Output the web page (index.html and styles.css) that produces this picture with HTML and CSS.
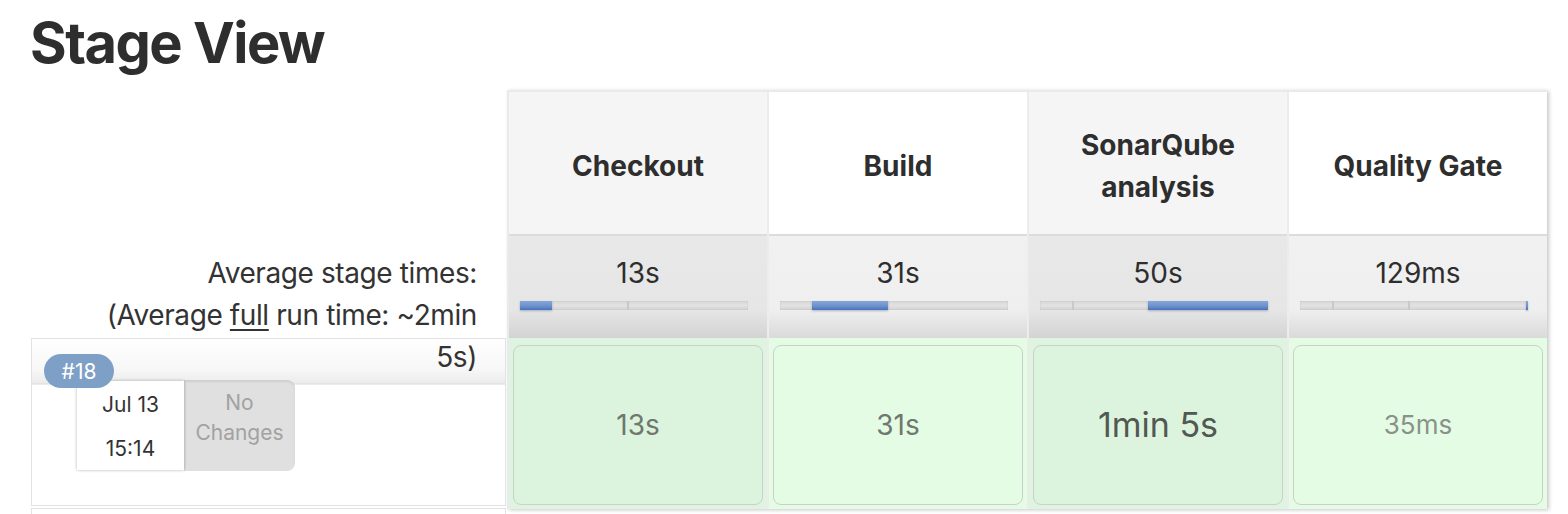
FILE: index.html
```html
<!DOCTYPE html>
<html lang="en">
<head>
<meta charset="utf-8">
<title>Stage View</title>
<link rel="stylesheet" href="styles.css">
</head>
<body>
<div class="page">
  <h1 class="title">Stage View</h1>
  <div class="stage-view">
    <div class="jobs">
      <div class="jobs-spacer"></div>
      <div class="avg-label">Average stage times:<br>(Average <u>full</u> run time: ~2min 5s)</div>
      <div class="job-row">
        <span class="badge">#18</span>
        <div class="job-info">
          <div class="date"><div>Jul 13</div><div>15:14</div></div>
          <div class="changes">No<br>Changes</div>
        </div>
      </div>
      <div class="job-row next"></div>
    </div>

    <div class="stages">
      <div class="head odd"><span>Checkout</span></div>
      <div class="head even"><span>Build</span></div>
      <div class="head odd"><span>SonarQube analysis</span></div>
      <div class="head even"><span>Quality Gate</span></div>

      <div class="avg odd">
        <div class="avg-time">13s</div>
        <div class="track">
          <div class="seg active" style="width:32px"></div>
          <div class="seg" style="width:75px"></div>
          <div class="seg sep" style="width:121px"></div>
        </div>
      </div>
      <div class="avg even">
        <div class="avg-time">31s</div>
        <div class="track">
          <div class="seg" style="width:32px"></div>
          <div class="seg active" style="width:76px"></div>
          <div class="seg" style="width:120px"></div>
        </div>
      </div>
      <div class="avg odd">
        <div class="avg-time">50s</div>
        <div class="track">
          <div class="seg" style="width:32px"></div>
          <div class="seg sep" style="width:76px"></div>
          <div class="seg active" style="width:120px"></div>
        </div>
      </div>
      <div class="avg even">
        <div class="avg-time">129ms</div>
        <div class="track">
          <div class="seg" style="width:32px"></div>
          <div class="seg sep" style="width:76px"></div>
          <div class="seg sep" style="width:118px"></div>
          <div class="seg active" style="width:2px"></div>
        </div>
      </div>

      <div class="run odd"><div class="box"><span class="dur-m">13s</span></div></div>
      <div class="run even"><div class="box"><span class="dur-m">31s</span></div></div>
      <div class="run odd"><div class="box"><span class="dur-l">1min 5s</span></div></div>
      <div class="run even"><div class="box"><span class="dur-s">35ms</span></div></div>
    </div>
  </div>
</div>
</body>
</html>
```

FILE: styles.css
```css
html, body {
  margin: 0;
  padding: 0;
  background: #fff;
}

body {
  font-family: Inter, "Noto Sans", "Liberation Sans", sans-serif;
  color: #333;
  font-size: 28px;
  line-height: 42px;
}

.page {
  padding-left: 31px;
  overflow: hidden;
  height: 514px;
}

.title {
  margin: 10px 0 0 -1px;
  font-size: 56px;
  line-height: 67px;
  font-weight: 700;
  letter-spacing: -1.5px;
  color: #2e2e2e;
}

.stage-view {
  display: flex;
  align-items: flex-start;
  margin-top: 13px;
}

/* ---- left: job column ---- */
.jobs {
  width: 475px;
  flex: none;
}

.jobs-spacer {
  height: 146px;
}

.avg-label {
  position: relative;
  z-index: 1;
  box-sizing: border-box;
  height: 102px;
  padding: 16px 29px 0 60px;
  text-align: right;
  letter-spacing: -0.4px;
  color: #333;
}

.avg-label u {
  text-decoration-thickness: 2px;
  text-underline-offset: 4px;
}

.job-row {
  position: relative;
  box-sizing: border-box;
  height: 168px;
  border: 1px solid #e2e2e2;
  background:
    linear-gradient(to bottom, #ffffff 0, #f7f7f7 30px, #ececec 44px, #d9d9d9 45px, #ffffff 46px) no-repeat top left / 100% 46px,
    #fff;
}

.job-row.next {
  margin-top: 2px;
  height: 40px;
  background: #fff;
}

.badge {
  position: absolute;
  z-index: 2;
  left: 12px;
  top: 15px;
  width: 70px;
  height: 34px;
  border-radius: 17px;
  background: #7fa0c6;
  color: #fff;
  font-size: 21px;
  line-height: 35px;
  text-align: center;
}

.job-info {
  display: flex;
  padding: 42px 0 0 45px;
}

.date {
  position: relative;
  z-index: 1;
  box-sizing: border-box;
  width: 107px;
  height: 89px;
  padding-top: 2px;
  background: #fff;
  box-shadow: 0 0 3px rgba(0, 0, 0, 0.3);
  font-size: 21px;
  line-height: 44px;
  text-align: center;
  color: #333;
}

.changes {
  box-sizing: border-box;
  width: 111px;
  height: 91px;
  margin-top: -1px;
  padding-top: 8px;
  border-radius: 0 8px 8px 0;
  background: #e0e0e0;
  box-shadow: inset 0 2px 2px rgba(0, 0, 0, 0.08);
  color: #a2a2a2;
  font-size: 21px;
  line-height: 30px;
  text-align: center;
}

/* ---- right: stage table ---- */
.stages {
  margin-left: 1px;
  display: grid;
  grid-template-columns: repeat(4, 258px);
  grid-template-rows: 144px 102px 171px;
  column-gap: 2px;
  background: #ececec;
  border-top: 2px solid #e8ebee;
  border-left: 2px solid #e8ebee;
  box-shadow: 2px 1px 4px rgba(0, 0, 0, 0.22);
}

.head {
  box-sizing: border-box;
  display: flex;
  align-items: center;
  justify-content: center;
  padding: 5px 24px 0;
  border-bottom: 2px solid #dcdcdc;
  font-weight: 700;
  text-align: center;
  color: #2e2e2e;
}

.head.odd { background: #f5f5f5; }
.head.even { background: #fff; }

.avg {
  box-sizing: border-box;
  padding-top: 16px;
  text-align: center;
}

.avg.odd { background: linear-gradient(to bottom, #e8e8e8 0, #e6e6e6 72%, #d3d3d3 100%); }
.avg.even { background: linear-gradient(to bottom, #f1f1f1 0, #efefef 72%, #dadada 100%); }

.avg-time {
  color: #2e2e2e;
}

.track {
  display: flex;
  margin: 7px 0 0 11px;
  width: 228px;
  height: 9px;
  background: linear-gradient(to bottom, #d6d6d6, #e2e2e2 50%, #d2d2d2);
  box-shadow: inset 0 0 1px rgba(0, 0, 0, 0.3);
}

.seg {
  box-sizing: border-box;
  height: 9px;
}

.seg.sep {
  border-left: 2px solid #c9c9c9;
}

.seg.active {
  background: linear-gradient(to bottom, #86a6d6 0, #6d92cc 55%, #4a72bb 100%);
  box-shadow: 0 1px 2px rgba(40, 70, 130, 0.35);
}

.run {
  box-sizing: border-box;
  padding: 7px 4px 4px;
}

.run.odd { background: #def3e0; }
.run.even { background: #e4fbe4; }

.box {
  box-sizing: border-box;
  height: 160px;
  border: 1px solid #c9d2c9;
  border-radius: 8px;
  display: flex;
  align-items: center;
  justify-content: center;
}

.run.odd .box { background: #dcf4de; }
.run.even .box { background: #e4fce4; }

.dur-m {
  font-size: 28px;
  color: #6f776f;
}

.dur-l {
  font-size: 34px;
  color: #525852;
}

.dur-s {
  font-size: 26px;
  color: #8a918a;
}
```
